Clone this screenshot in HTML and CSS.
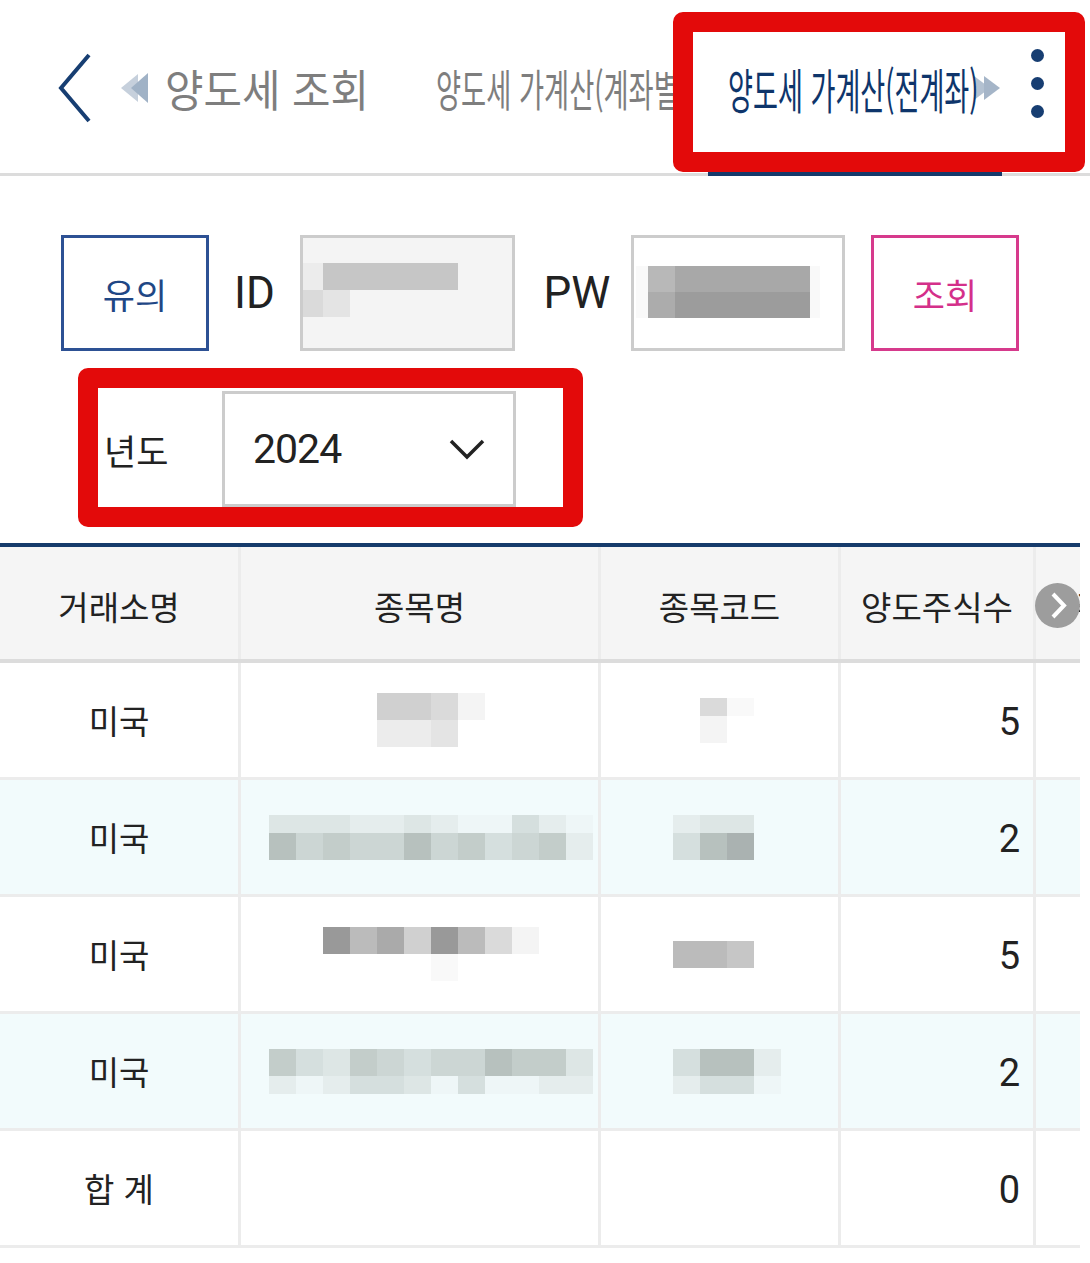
FILE: index.html
```html
<!DOCTYPE html>
<html lang="ko">
<head>
  <meta charset="UTF-8">
  <title>양도세 가계산(전계좌)</title>
  <meta name="viewport" content="width=device-width, initial-scale=1">
  <link rel="stylesheet" href="styles.css">
</head>
<body>

<header class="topbar">
  <a class="back" href="#">
    <svg width="34" height="70" viewBox="0 0 34 70"><polyline points="31,2 3,35 31,68" fill="none" stroke="#173e72" stroke-width="4"/></svg>
  </a>
  <nav class="tabs">
    <a class="tab tab-first" href="#">
      <svg class="arrows" width="28" height="32" viewBox="0 0 28 32"><polygon points="0,16 17,2 17,30" fill="#c6d0dc"/><polygon points="10,16 27,1 27,31" fill="#a0b2c6"/></svg>
      <span class="tab-label">양도세 조회</span>
    </a>
    <a class="tab tab-mid" href="#">
      <span class="squeeze"><span>양도세 가계산(계좌별)</span></span>
    </a>
    <a class="tab tab-mid active" href="#">
      <span class="squeeze"><span>양도세 가계산(전계좌)</span></span>
      <svg class="arrows-next" width="26" height="24" viewBox="0 0 26 24"><polygon points="0,0 16,12 0,24" fill="#b3c1d1"/><polygon points="10,0 26,12 10,24" fill="#a5b5c8"/></svg>
    </a>
  </nav>
  <div class="more"><span class="dot"></span><span class="dot"></span><span class="dot"></span></div>
</header>

<section class="login">
  <div class="row">
    <div class="btn btn-notice">유의</div>
    <div class="label label-id">ID</div>
    <div class="field field-id">
      <div class="mosaic">
        <div class="mrow"><span class="m w20 g2"></span><span class="m g6"></span><span class="m g6"></span><span class="m g6"></span><span class="m g6"></span><span class="m g6"></span><span class="m g1"></span></div>
        <div class="mrow"><span class="m w20 g4"></span><span class="m g3"></span></div>
      </div>
    </div>
    <div class="label label-pw">PW</div>
    <div class="field field-pw">
      <div class="mosaic">
        <div class="mrow"><span class="m w12 g0"></span><span class="m p1"></span><span class="m w135 p2"></span><span class="m w10 g0"></span></div>
        <div class="mrow"><span class="m w12 g0"></span><span class="m p3"></span><span class="m w135 p4"></span><span class="m w10 g0"></span></div>
      </div>
    </div>
    <div class="btn btn-search">조회</div>
  </div>

  <div class="row row-year">
    <div class="label label-year">년도</div>
    <div class="select">
      <span class="year">2024</span>
      <svg width="36" height="21" viewBox="0 0 36 21"><polyline points="2,2 18,18 34,2" fill="none" stroke="#222" stroke-width="3.5"/></svg>
    </div>
  </div>
</section>

<section class="table-wrap">
  <div class="tr thead">
    <div class="td">거래소명</div>
    <div class="td">종목명</div>
    <div class="td">종목코드</div>
    <div class="td">양도주식수</div>
    <div class="td td-more">주당단가</div>
  </div>

  <div class="tr">
    <div class="td">미국</div>
    <div class="td td-name">
      <div class="mosaic">
        <div class="mrow"><span class="m g5"></span><span class="m g5"></span><span class="m g4"></span><span class="m g1"></span></div>
        <div class="mrow"><span class="m g2"></span><span class="m g2"></span><span class="m g3"></span><span class="m"></span></div>
      </div>
    </div>
    <div class="td td-code">
      <div class="mosaic">
        <div class="mrow short"><span class="m"></span><span class="m g4"></span><span class="m g0"></span></div>
        <div class="mrow"><span class="m"></span><span class="m g1"></span><span class="m"></span></div>
      </div>
    </div>
    <div class="td td-num">5</div>
    <div class="td"></div>
  </div>

  <div class="tr alt">
    <div class="td">미국</div>
    <div class="td td-name">
      <div class="mosaic">
        <div class="mrow short"><span class="m t3"></span><span class="m t3"></span><span class="m t3"></span><span class="m t2"></span><span class="m t2"></span><span class="m t3"></span><span class="m t2"></span><span class="m t1"></span><span class="m t1"></span><span class="m t4"></span><span class="m t2"></span><span class="m t1"></span></div>
        <div class="mrow"><span class="m t7"></span><span class="m t5"></span><span class="m t6"></span><span class="m t5"></span><span class="m t5"></span><span class="m t7"></span><span class="m t5"></span><span class="m t6"></span><span class="m t4"></span><span class="m t5"></span><span class="m t6"></span><span class="m t2"></span></div>
      </div>
    </div>
    <div class="td td-code">
      <div class="mosaic">
        <div class="mrow short"><span class="m t2"></span><span class="m t3"></span><span class="m t3"></span></div>
        <div class="mrow"><span class="m t4"></span><span class="m t7"></span><span class="m t8"></span></div>
      </div>
    </div>
    <div class="td td-num">2</div>
    <div class="td"></div>
  </div>

  <div class="tr">
    <div class="td">미국</div>
    <div class="td td-name">
      <div class="mosaic">
        <div class="mrow"><span class="m g9"></span><span class="m g7"></span><span class="m g8"></span><span class="m g5"></span><span class="m g9"></span><span class="m g7"></span><span class="m g4"></span><span class="m g1"></span></div>
        <div class="mrow"><span class="m"></span><span class="m"></span><span class="m"></span><span class="m"></span><span class="m g0"></span><span class="m"></span><span class="m"></span><span class="m"></span></div>
      </div>
    </div>
    <div class="td td-code">
      <div class="mosaic">
        <div class="mrow"><span class="m g7"></span><span class="m g7"></span><span class="m g6"></span></div>
      </div>
    </div>
    <div class="td td-num">5</div>
    <div class="td"></div>
  </div>

  <div class="tr alt">
    <div class="td">미국</div>
    <div class="td td-name">
      <div class="mosaic">
        <div class="mrow"><span class="m t6"></span><span class="m t4"></span><span class="m t3"></span><span class="m t6"></span><span class="m t5"></span><span class="m t4"></span><span class="m t5"></span><span class="m t5"></span><span class="m t7"></span><span class="m t6"></span><span class="m t6"></span><span class="m t3"></span></div>
        <div class="mrow short"><span class="m t2"></span><span class="m t1"></span><span class="m t2"></span><span class="m t4"></span><span class="m t4"></span><span class="m t3"></span><span class="m t1"></span><span class="m t4"></span><span class="m t1"></span><span class="m t1"></span><span class="m t2"></span><span class="m t2"></span></div>
      </div>
    </div>
    <div class="td td-code">
      <div class="mosaic">
        <div class="mrow"><span class="m t4"></span><span class="m t7"></span><span class="m t7"></span><span class="m t2"></span></div>
        <div class="mrow short"><span class="m t2"></span><span class="m t4"></span><span class="m t4"></span><span class="m t1"></span></div>
      </div>
    </div>
    <div class="td td-num">2</div>
    <div class="td"></div>
  </div>

  <div class="tr">
    <div class="td">합 계</div>
    <div class="td"></div>
    <div class="td"></div>
    <div class="td td-num">0</div>
    <div class="td"></div>
  </div>

  <div class="scroll-hint">
    <svg width="45" height="45" viewBox="0 0 45 45"><circle cx="22.5" cy="22.5" r="22.5" fill="#9d9d9d"/><polyline points="18,11 29,22.5 18,34" fill="none" stroke="#fff" stroke-width="4"/></svg>
  </div>
</section>

<div class="mark mark-tabs"></div>
<div class="mark mark-year"></div>

</body>
</html>
```

FILE: styles.css
```css
* { box-sizing: border-box; }
body {
  margin: 0;
  width: 1090px;
  position: relative;
  font-family: Roboto, "Noto Sans CJK KR", sans-serif;
  color: #222;
  background: #fff;
}
a { text-decoration: none; color: inherit; }

/* top bar with tabs */
.topbar {
  display: flex;
  align-items: center;
  height: 176px;
  border-bottom: 3px solid #dcdcdc;
}
.back {
  display: flex;
  margin-left: 58px;
  margin-top: 2px;
}
.tabs {
  display: flex;
  align-self: stretch;
  margin-bottom: -3px;
  margin-left: 29px;
  flex: 1;
  overflow: hidden;
}
.tab {
  display: flex;
  align-items: center;
  flex: 0 0 auto;
  padding-top: 6px;
  border-bottom: 6px solid transparent;
  white-space: nowrap;
  line-height: 1;
  color: #7e7e7e;
  font-family: "Noto Sans CJK KR", sans-serif;
}
.tab-first {
  font-size: 44px;
  width: 295px;
}
.tab-first .arrows { flex: 0 0 auto; margin-right: 16px; }
.tab-label {
  display: inline-block;
  transform: scaleX(0.95);
  transform-origin: 0 50%;
}
.tab-mid {
  width: 292px;
  padding-left: 20px;
  font-size: 44px;
}
.squeeze {
  display: inline-block;
  width: 250px;
}
.squeeze span {
  display: inline-block;
  transform: scaleX(0.62);
  transform-origin: 0 50%;
}
.tab.active {
  width: 294px;
  color: #0e356b;
  font-size: 48px;
  border-bottom-color: #153a6b;
}
.tab.active .squeeze span { transform: scaleX(0.565); }
.arrows-next { margin-left: -4px; }

.more {
  display: flex;
  flex-direction: column;
  gap: 15px;
  margin: -6px 46px 0 0;
}
.dot {
  width: 13px;
  height: 13px;
  border-radius: 50%;
  background: #173e72;
}

/* login form */
.login {
  padding: 59px 0 0 61px;
}
.row {
  display: flex;
  align-items: center;
  height: 116px;
}
.btn {
  display: flex;
  align-items: center;
  justify-content: center;
  width: 148px;
  height: 116px;
  font-family: "Noto Sans CJK KR", sans-serif;
  font-size: 35px;
  line-height: 1;
}
.btn-notice {
  border: 3px solid #2d5194;
  color: #1f4785;
}
.btn-search {
  margin-left: 26px;
  border: 3px solid #d63a8c;
  color: #d4308a;
}
.label {
  font-size: 44px;
  line-height: 1;
  text-align: center;
}
.label-id { width: 91px; }
.label-pw { width: 116px; padding-left: 8px; }
.field {
  width: 215px;
  height: 116px;
  border: 3px solid #ccc;
}
.field-id {
  background: #f4f4f4;
  padding-top: 25px;
}
.field-pw {
  width: 214px;
  background: #fff;
  padding: 28px 0 0 2px;
}

.row-year { margin-top: 40px; }
.label-year {
  width: 118px;
  margin-left: 43px;
  text-align: left;
  font-family: "Noto Sans CJK KR", sans-serif;
  font-size: 35px;
}
.select {
  display: flex;
  align-items: center;
  justify-content: space-between;
  width: 294px;
  height: 116px;
  padding: 0 28px;
  border: 3px solid #ccc;
  font-size: 41px;
  line-height: 1;
}
.year { letter-spacing: -1px; }

/* pixelated (hidden) values */
.mosaic { display: flex; flex-direction: column; }
.mrow { display: flex; }
.m { width: 27px; height: 27px; flex: 0 0 auto; }
.mrow.short .m { height: 18px; }
.m.w20 { width: 20px; }
.m.w12 { width: 12px; }
.m.w10 { width: 10px; }
.m.w135 { width: 135px; }
.g9 { background: #999; }
.g8 { background: #aaa; }
.g7 { background: #bbb; }
.g6 { background: #c6c6c6; }
.g5 { background: #d0d0d0; }
.g4 { background: #dadada; }
.g3 { background: #e4e4e4; }
.g2 { background: #ececec; }
.g1 { background: #f4f4f4; }
.g0 { background: #f9f9f9; }
.p1 { background: #b8b8b8; }
.p2 { background: #a8a8a8; }
.p3 { background: #acacac; }
.p4 { background: #9c9c9c; }
.t8 { background: #aab2b1; }
.t7 { background: #b7c1be; }
.t6 { background: #c3cdca; }
.t5 { background: #ccd6d4; }
.t4 { background: #d5dfde; }
.t3 { background: #dde6e5; }
.t2 { background: #e5eded; }
.t1 { background: #eef6f7; }
.field-pw .m { height: 26px; }

/* result table */
.table-wrap {
  position: relative;
  width: 1080px;
  margin-top: 36px;
  overflow: hidden;
  border-top: 4px solid #163b6b;
}
.tr {
  display: grid;
  grid-template-columns: 241px 360px 240px 195px 240px;
  width: 1276px;
  height: 117px;
  border-bottom: 3px solid #ececec;
}
.tr.alt { background: #f2fbfc; }
.tr.thead {
  height: 116px;
  background: #f5f5f5;
  border-bottom: 4px solid #dcdcdc;
}
.td {
  display: flex;
  align-items: center;
  justify-content: center;
  border-right: 3px solid #ececec;
  font-family: "Noto Sans CJK KR", sans-serif;
  font-size: 33px;
  line-height: 1;
}
.thead .td { padding-top: 6px; }
.td-more { justify-content: flex-start; padding-left: 39px; }
.td-name { padding-left: 22px; }
.td-code { justify-content: flex-start; padding-left: 72px; }
.td-num {
  justify-content: flex-end;
  padding-right: 13px;
  padding-top: 3px;
  font-family: Roboto, sans-serif;
  font-size: 38px;
}
.scroll-hint {
  position: absolute;
  left: 1035px;
  top: 36px;
  display: flex;
}

/* red highlight boxes drawn over the capture */
.mark {
  position: absolute;
  border: 20px solid #e30a0a;
  border-radius: 10px;
}
.mark-tabs {
  left: 673px;
  top: 12px;
  width: 412px;
  height: 160px;
}
.mark-year {
  left: 78px;
  top: 368px;
  width: 505px;
  height: 159px;
}
```
